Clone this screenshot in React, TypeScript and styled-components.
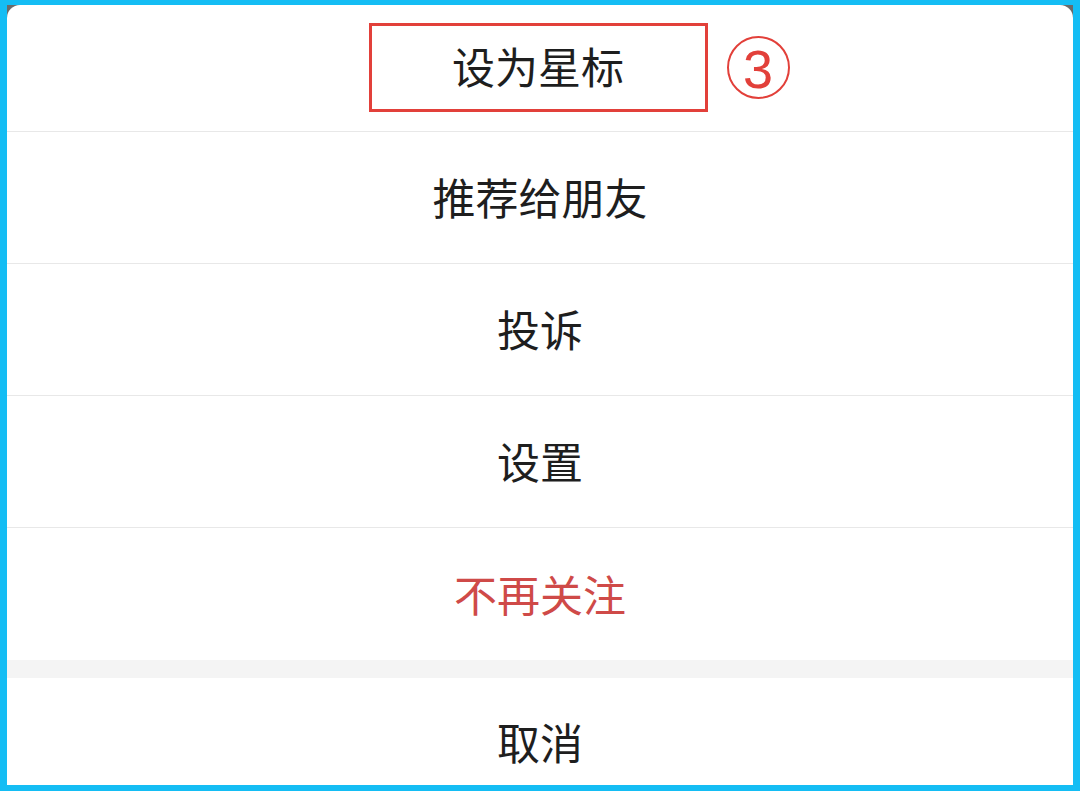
import React from "react";
import styled, { createGlobalStyle } from "styled-components";

const Global = createGlobalStyle`
  html, body { margin: 0; padding: 0; background: #14bdf4; }
  body { font-family: "Noto Sans CJK SC", "Noto Sans", sans-serif; }
`;

const Frame = styled.div`
  width: 1080px;
  height: 791px;
  box-sizing: border-box;
  padding: 5px 7px 6px 7px;
  background: #14bdf4;
  display: flex;
`;

const Backdrop = styled.div`
  flex: 1;
  background: #6a6a6a;
  display: flex;
`;

const Sheet = styled.div`
  flex: 1;
  background: #ffffff;
  border-radius: 13px 13px 0 0;
  display: flex;
  flex-direction: column;
  overflow: hidden;
`;

const Row = styled.div<{ $h: number; $danger?: boolean; $last?: boolean }>`
  height: ${(p) => p.$h}px;
  box-sizing: border-box;
  flex: none;
  display: flex;
  align-items: center;
  justify-content: center;
  padding-bottom: 2px;
  border-bottom: ${(p) => (p.$last ? "none" : "1px solid #e8e8e8")};
  font-size: 43px;
  line-height: 1;
  color: ${(p) => (p.$danger ? "#cf4a48" : "#1e1e1e")};
`;

const Gap = styled.div`
  height: 18px;
  flex: none;
  background: #f4f4f4;
`;

const CancelRow = styled.div`
  flex: 1;
  display: flex;
  align-items: center;
  justify-content: center;
  padding-top: 20px;
  font-size: 43px;
  line-height: 1;
  color: #1e1e1e;
`;

const Highlight = styled.div`
  position: relative;
  width: 339px;
  height: 89px;
  box-sizing: border-box;
  border: 3px solid #e2403a;
  display: flex;
  align-items: center;
  justify-content: center;
  padding-bottom: 4px;
  margin-left: -4px;
  margin-top: 1px;
`;

const StepBadge = styled.span`
  position: absolute;
  left: 355px;
  top: 10px;
  width: 63px;
  height: 63px;
  box-sizing: border-box;
  border: 2.5px solid #e2403a;
  border-radius: 50%;
  display: flex;
  align-items: center;
  justify-content: center;
  font-family: "Liberation Sans", Arial, sans-serif;
  font-size: 54px;
  line-height: 1;
  color: #e2403a;
  padding-top: 2px;
`;

export default function App() {
  return (
    <>
      <Global />
      <Frame>
        <Backdrop>
          <Sheet>
            <Row $h={127}>
              <Highlight>
                设为星标
                <StepBadge>3</StepBadge>
              </Highlight>
            </Row>
            <Row $h={132}>推荐给朋友</Row>
            <Row $h={132}>投诉</Row>
            <Row $h={132}>设置</Row>
            <Row $h={132} $danger $last>
              不再关注
            </Row>
            <Gap />
            <CancelRow>取消</CancelRow>
          </Sheet>
        </Backdrop>
      </Frame>
    </>
  );
}
